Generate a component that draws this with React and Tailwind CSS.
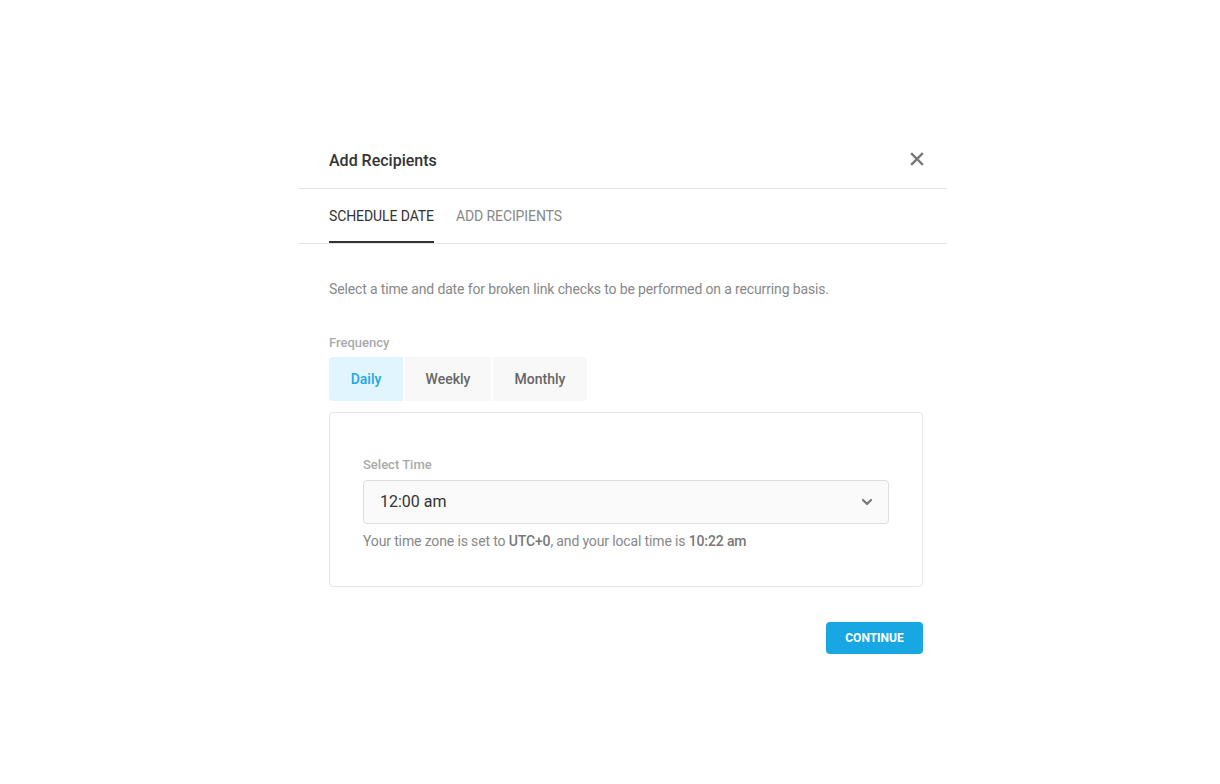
import React, { useState } from 'react';

const CloseIcon = () => (
  <svg width="14" height="14" viewBox="0 0 14 14" fill="none" stroke="currentColor" strokeWidth="2.4" strokeLinecap="square">
    <path d="M2 2l10 10M12 2L2 12" />
  </svg>
);

const Chevron = () => (
  <svg width="12" height="8" viewBox="0 0 12 8" fill="none" stroke="currentColor" strokeWidth="2.2" strokeLinecap="round" strokeLinejoin="round">
    <path d="M2 2l4 4 4-4" />
  </svg>
);

const App = () => {
  const [freq, setFreq] = useState('Daily');
  const options = ['Daily', 'Weekly', 'Monthly'];
  const widths = { Daily: 'w-[74px]', Weekly: 'w-[86px]', Monthly: 'w-[94px]' };

  return (
    <div className="min-h-screen bg-white pt-[133px]" style={{ fontFamily: 'Roboto, "Liberation Sans", sans-serif' }}>
      <div className="ml-[298px] w-[649px]">
        <div className="h-[56px] flex items-center justify-between pl-[31px] pr-[23px] border-b border-[#e6e6e6]">
          <h1 className="text-[16px] font-medium text-[#333]">Add Recipients</h1>
          <button className="text-[#777] -mt-[3px]"><CloseIcon /></button>
        </div>

        <div className="flex gap-[22px] pl-[31px] border-b border-[#e6e6e6]">
          <div className="h-[54px] pt-[3px] flex items-center border-b-2 border-[#333] text-[14px] text-[#333] uppercase tracking-[-0.1px]">Schedule Date</div>
          <div className="h-[54px] pt-[1px] flex items-center text-[14px] text-[#888] uppercase tracking-[-0.1px]">Add Recipients</div>
        </div>

        <div className="pl-[31px] pr-[24px]">
          <p className="mt-[35px] text-[14px] leading-[20px] text-[#888] tracking-[-0.14px]">
            Select a time and date for broken link checks to be performed on a recurring basis.
          </p>

          <div className="mt-[35px] text-[13px] leading-[18px] font-medium text-[#aaa]">Frequency</div>
          <div className="mt-[5px] flex gap-[2px]">
            {options.map(o => (
              <button
                key={o}
                onClick={() => setFreq(o)}
                className={`${widths[o]} h-[44px] text-[14px] font-medium first:rounded-l last:rounded-r ${freq === o ? 'bg-[#e1f5fe] text-[#1ea7e4]' : 'bg-[#f8f8f8] text-[#666]'}`}
              >
                {o}
              </button>
            ))}
          </div>

          <div className="mt-[11px] border border-[#e6e6e6] rounded px-[33px] pt-[43px] pb-[35px]">
            <div className="text-[13px] leading-[18px] font-medium text-[#aaa]">Select Time</div>
            <div className="mt-[6px] h-[44px] flex items-center justify-between bg-[#fafafa] border border-[#dddddd] rounded pl-[16px] pr-[15px]">
              <span className="text-[16px] text-[#333]">12:00 am</span>
              <span className="text-[#777]"><Chevron /></span>
            </div>
            <p className="mt-[7px] text-[14px] leading-[20px] text-[#888] tracking-[-0.14px]">
              Your time zone is set to <span className="font-medium text-[#777]">UTC+0</span>, and your local time is <span className="font-medium text-[#777]">10:22 am</span>
            </p>
          </div>

          <div className="mt-[35px] flex justify-end">
            <button className="w-[97px] h-[32px] rounded bg-[#17a8e3] text-white text-[12px] font-bold uppercase">Continue</button>
          </div>
        </div>
      </div>
    </div>
  );
};

export default App;
